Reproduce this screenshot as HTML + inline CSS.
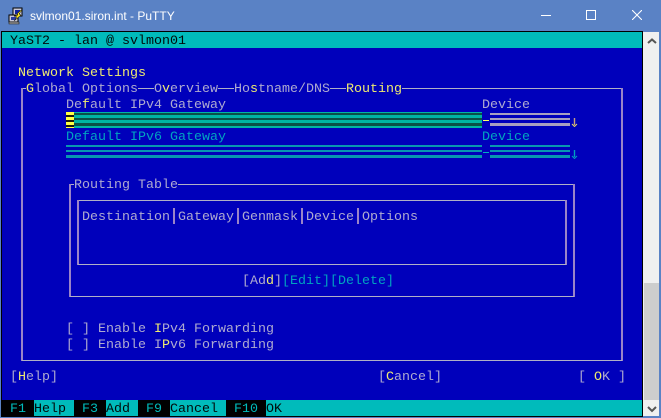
<!DOCTYPE html>
<html><head><meta charset="utf-8"><style>
html,body{margin:0;padding:0;width:661px;height:418px;overflow:hidden;background:#5a82c5}
#t{position:absolute;left:2px;top:32px;width:640px;height:384px;background:#0000bb}
.s{position:absolute;white-space:pre;font:13.33px/16px "Liberation Mono",monospace;color:#aeaad0;height:16px;margin-top:2px}
.y{color:#eeea70}.c{color:#00a4c0}.k{color:#000a0a}.f{color:#00bbbb}
.h,.v,.b{position:absolute}
.h{height:1px;background:#b0b0c6}
.v{width:2px;background:#9a84c8}
</style></head><body>
<div class="b" style="left:1px;top:31px;width:642px;height:386px;background:#000"></div>
<div id="t"></div>

<svg class="b" style="left:8px;top:7px" width="18" height="18" viewBox="0 0 18 18">
<path d="M5 1h9v8H5z" fill="#c8c8d8" stroke="#000"/><path d="M7 3h5v4H7z" fill="#10209a"/>
<path d="M1 8h9v7H1z" fill="#c8c8d8" stroke="#000" /><path d="M3 10h5v3H3z" fill="#2a3aa0"/>
<path d="M1 15h10v2H1z" fill="#909090" stroke="#222" stroke-width=".6"/>
<path d="M13 3L9 7l1 1-4 1 3 1-3 4 7-6-2-1 3-4z" fill="#ffe820" stroke="#000" stroke-width=".5"/>
</svg>
<div class="b" style="left:30px;top:7px;height:18px;font:12px/18px 'Liberation Sans',sans-serif;color:#fff;white-space:pre">svlmon01.siron.int - PuTTY</div>
<div class="b" style="left:541px;top:15px;width:10px;height:1px;background:#fff"></div>
<div class="b" style="left:586px;top:10px;width:8px;height:8px;border:1px solid #fff"></div>
<svg class="b" style="left:632px;top:10px" width="10" height="10"><path d="M0 0L10 10M10 0L0 10" stroke="#fff" stroke-width="1.1"/></svg>

<div class="b" style="left:643px;top:32px;width:16px;height:384px;background:#f0f0f0"></div>
<div class="b" style="left:644px;top:283px;width:15px;height:117px;background:#cdcdcd"></div>
<svg class="b" style="left:646px;top:36px" width="12" height="10"><path d="M2 7L6 3.5L10 7" fill="none" stroke="#555" stroke-width="2"/></svg>
<svg class="b" style="left:646px;top:404px" width="12" height="10"><path d="M2 3L6 7L10 3" fill="none" stroke="#555" stroke-width="2"/></svg>

<!-- top bar -->
<div class="b" style="left:2px;top:32px;width:640px;height:16px;background:#00bbbb"></div>
<div class="s k" style="left:10px;top:32px">YaST2 - lan @ svlmon01</div>

<div class="s y" style="left:18px;top:64px">Network Settings</div>

<!-- outer frame -->
<div class="h" style="left:22px;top:88px;width:4px"></div>
<div class="h" style="left:138px;top:88px;width:16px"></div>
<div class="h" style="left:218px;top:88px;width:16px"></div>
<div class="h" style="left:330px;top:88px;width:16px"></div>
<div class="h" style="left:402px;top:88px;width:220px"></div>
<div class="v" style="left:21px;top:88px;height:273px"></div>
<div class="v" style="left:621px;top:88px;height:273px"></div>
<div class="h" style="left:22px;top:360px;width:600px"></div>
<div class="s" style="left:26px;top:80px"><span class="y">G</span>lobal Options</div>
<div class="s" style="left:154px;top:80px">O<span class="y">v</span>erview</div>
<div class="s" style="left:234px;top:80px">Ho<span class="y">s</span>tname/DNS</div>
<div class="s y" style="left:346px;top:80px">Routing</div>

<div class="s" style="left:66px;top:96px">De<span class="y">f</span>ault IPv4 Gateway</div>
<div class="s" style="left:482px;top:96px">Device</div>
<div class="s c" style="left:66px;top:128px">Default IPv6 Gateway</div>
<div class="s c" style="left:482px;top:128px">Device</div>

<!-- IPv4 input -->
<div class="b" style="left:66px;top:112px;width:416px;height:16px;background:#00b4a4"></div>
<div class="b" style="left:74px;top:113px;width:408px;height:2px;background:#0a5048"></div>
<div class="b" style="left:74px;top:118px;width:408px;height:2px;background:#0a5048"></div>
<div class="b" style="left:74px;top:123px;width:408px;height:3px;background:#0a5048"></div>
<div class="b" style="left:66px;top:112px;width:8px;height:16px;background:#ffff44"></div>
<div class="b" style="left:66px;top:115px;width:8px;height:2px;background:#1a1a10"></div>
<div class="b" style="left:66px;top:120px;width:8px;height:2px;background:#1a1a10"></div>
<div class="b" style="left:66px;top:125px;width:8px;height:2px;background:#1a1a10"></div>
<div class="b" style="left:483px;top:120px;width:6px;height:1px;background:#ffff66"></div>
<div class="b" style="left:490px;top:113px;width:80px;height:2px;background:#a8a0c0"></div>
<div class="b" style="left:490px;top:118px;width:80px;height:2px;background:#a8a0c0"></div>
<div class="b" style="left:490px;top:123px;width:80px;height:3px;background:#a8a0c0"></div>
<svg class="b" style="left:571px;top:117px" width="7" height="10"><path d="M3.5 1V8" stroke="#c8a080" stroke-width="1.4"/><path d="M1 7L3.5 9.5L6 7" fill="none" stroke="#e8d860" stroke-width="1"/></svg>

<!-- IPv6 input -->
<div class="b" style="left:66px;top:145px;width:416px;height:2px;background:#0898b0"></div>
<div class="b" style="left:66px;top:150px;width:416px;height:2px;background:#0898b0"></div>
<div class="b" style="left:66px;top:155px;width:416px;height:3px;background:#0898b0"></div>
<div class="b" style="left:483px;top:152px;width:6px;height:1px;background:#00b0c0"></div>
<div class="b" style="left:490px;top:145px;width:80px;height:2px;background:#0898b0"></div>
<div class="b" style="left:490px;top:150px;width:80px;height:2px;background:#0898b0"></div>
<div class="b" style="left:490px;top:155px;width:80px;height:3px;background:#0898b0"></div>
<svg class="b" style="left:571px;top:149px" width="7" height="10"><path d="M3.5 1V8" stroke="#00a0c0" stroke-width="1.4"/><path d="M1 7L3.5 9.5L6 7" fill="none" stroke="#00a0c0" stroke-width="1"/></svg>

<!-- Routing table frame -->
<div class="h" style="left:70px;top:184px;width:4px"></div>
<div class="h" style="left:178px;top:184px;width:396px"></div>
<div class="v" style="left:69px;top:184px;height:113px"></div>
<div class="v" style="left:573px;top:184px;height:113px"></div>
<div class="h" style="left:70px;top:296px;width:504px"></div>
<div class="s" style="left:74px;top:176px">Routing Table</div>

<div class="h" style="left:78px;top:200px;width:488px"></div>
<div class="v" style="left:77px;top:200px;height:65px"></div>
<div class="v" style="left:565px;top:200px;height:65px"></div>
<div class="h" style="left:78px;top:264px;width:488px"></div>

<div class="s" style="left:82px;top:208px">Destination</div>
<div class="v" style="left:173px;top:208px;height:16px"></div>
<div class="s" style="left:178px;top:208px">Gateway</div>
<div class="v" style="left:237px;top:208px;height:16px"></div>
<div class="s" style="left:242px;top:208px">Genmask</div>
<div class="v" style="left:301px;top:208px;height:16px"></div>
<div class="s" style="left:306px;top:208px">Device</div>
<div class="v" style="left:357px;top:208px;height:16px"></div>
<div class="s" style="left:362px;top:208px">Options</div>

<div class="s" style="left:242px;top:272px">[Ad<span class="y">d</span>]</div>
<div class="s c" style="left:282px;top:272px">[Edit]</div>
<div class="s c" style="left:330px;top:272px">[Delete]</div>

<div class="s" style="left:66px;top:320px">[ ] Enable <span class="y">I</span>Pv4 Forwarding</div>
<div class="s" style="left:66px;top:336px">[ ] Enable I<span class="y">P</span>v6 Forwarding</div>

<div class="s" style="left:10px;top:368px">[<span class="y">H</span>elp]</div>
<div class="s" style="left:378px;top:368px">[<span class="y">C</span>ancel]</div>
<div class="s" style="left:578px;top:368px">[ <span class="y">O</span>K ]</div>

<!-- bottom bar -->
<div class="b" style="left:2px;top:400px;width:640px;height:16px;background:#00bbbb"></div>
<div class="b" style="left:2px;top:400px;width:32px;height:16px;background:#000"></div>
<div class="b" style="left:74px;top:400px;width:32px;height:16px;background:#000"></div>
<div class="b" style="left:138px;top:400px;width:32px;height:16px;background:#000"></div>
<div class="b" style="left:226px;top:400px;width:40px;height:16px;background:#000"></div>
<div class="s f" style="left:10px;top:400px">F1</div>
<div class="s k" style="left:34px;top:400px">Help</div>
<div class="s f" style="left:82px;top:400px">F3</div>
<div class="s k" style="left:106px;top:400px">Add</div>
<div class="s f" style="left:146px;top:400px">F9</div>
<div class="s k" style="left:170px;top:400px">Cancel</div>
<div class="s f" style="left:234px;top:400px">F10</div>
<div class="s k" style="left:266px;top:400px">OK</div>
</body></html>
